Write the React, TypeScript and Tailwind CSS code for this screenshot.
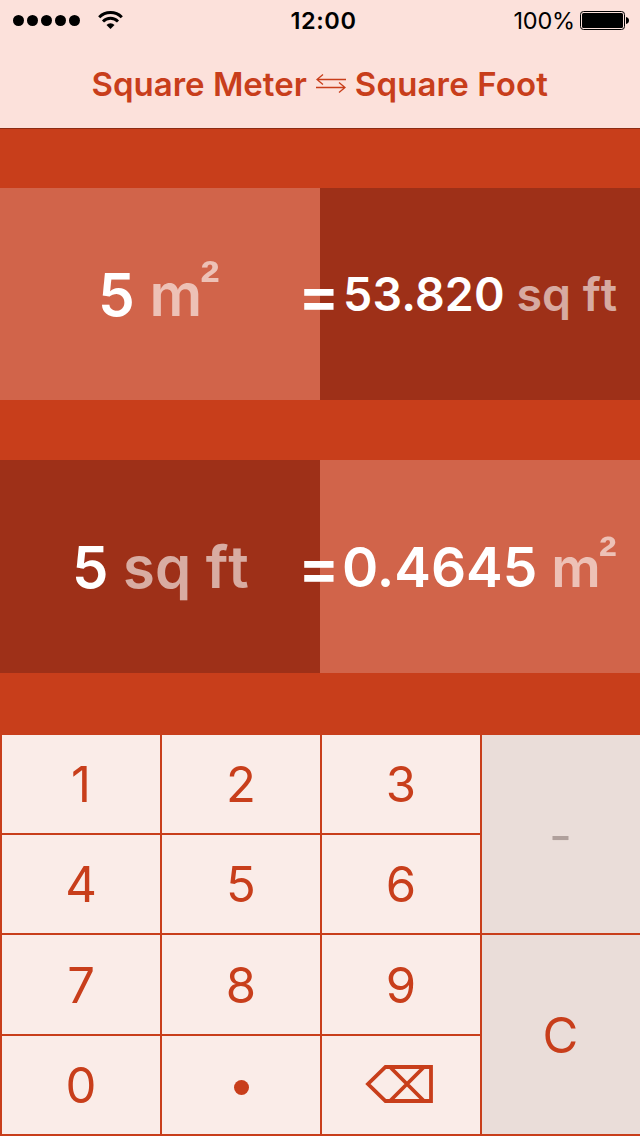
import type { ReactNode } from 'react';

const KEYS = ['1', '2', '3', '4', '5', '6', '7', '8', '9', '0'];

const StatusBar = () => (
  <div className="grid h-10 grid-cols-3 items-center pl-[13px] pr-[11px] text-black">
    <div className="flex items-center">
      <div className="flex gap-[3px]">
        {[0, 1, 2, 3, 4].map((dot) => (
          <span key={dot} className="h-[11px] w-[11px] rounded-full bg-black" />
        ))}
      </div>
      <svg className="ml-[18px]" width="25" height="19" viewBox="0 0 25 19" fill="none">
        <path d="M1.2 6.2a16 16 0 0 1 22.6 0" stroke="#000" strokeWidth="3" />
        <path d="M5 10.4a10.6 10.6 0 0 1 15 0" stroke="#000" strokeWidth="2.9" />
        <path d="M8.5 14a5.7 5.7 0 0 1 8 0l-4 4z" fill="#000" />
      </svg>
    </div>
    <span className="pl-[5px] pt-px text-center text-[23.5px] font-semibold tracking-[0.6px]">12:00</span>
    <div className="flex items-center justify-end">
      <span className="pt-[2px] text-[23.5px] tracking-[-0.2px]">100%</span>
      <svg className="ml-[5px]" width="49" height="19" viewBox="0 0 49 19">
        <rect x="0.5" y="0.5" width="44" height="18" rx="3" fill="none" stroke="#000" />
        <rect x="2" y="2" width="41" height="15" rx="1.5" fill="#000" />
        <path d="M46 6q3 .6 3 3.500t-3 3.500z" fill="#000" />
      </svg>
    </div>
  </div>
);

const SwapIcon = () => (
  <svg width="30" height="20" viewBox="0 0 30 20" fill="none" stroke="#c83e1b" strokeWidth="1.300">
    <path d="M30 5.500H1M7 .5 1 5.500 7 10.500" />
    <path d="M0 13.500h29M23 8.500 29 13.500 23 18.500" />
  </svg>
);

const Equals = () => (
  <span className="absolute left-[298px] top-0 flex h-full items-center text-[62px] font-semibold text-white">
    =
  </span>
);

const Unit = ({ children }: { children: ReactNode }) => (
  <span className="text-white/60 [font-kerning:none]">{children}</span>
);

export default function App() {
  return (
    <main
      className="flex h-[1136px] w-[640px] flex-col overflow-hidden bg-[#c83e1b]"
      style={{ fontFamily: 'Inter, "Liberation Sans", sans-serif' }}
    >
      <header className="h-[129px] border-b border-[#8d2c14] bg-[#fce1db]">
        <StatusBar />
        <h1 className="flex h-[88px] items-center pl-[91.5px] pt-px text-[33px] font-semibold text-[#c83e1b]">
          <span>Square Meter</span>
          <span className="ml-[9px] mr-[9px] pb-[2px]"><SwapIcon /></span>
          <span className="tracking-[0.15px]">Square Foot</span>
        </h1>
      </header>

      {/* square meters to square feet */}
      <section className="relative mt-[59px] grid h-[212px] grid-cols-2 font-semibold text-white">
        <div className="flex items-center bg-[#d1644a] pl-[98px] pt-px text-[58.5px] leading-[72px]">
          <p className="whitespace-nowrap">5 <Unit>m<span className="-ml-[2px] align-[14px] font-['Liberation_Sans'] text-[58px] leading-[0] font-bold">²</span></Unit></p>
        </div>
        <div className="flex items-center bg-[#9e3018] pl-[23px] pt-px text-[46.5px]">
          <p className="whitespace-nowrap"><span className="tracking-[0.15px]">53.820</span> <Unit>sq ft</Unit></p>
        </div>
        <Equals />
      </section>

      {/* square feet to square meters */}
      <section className="relative mt-[60px] grid h-[213px] grid-cols-2 font-semibold text-white">
        <div className="flex items-center bg-[#9e3018] pl-[72px] pt-px text-[58px]">
          <p className="whitespace-nowrap">5 <Unit>sq ft</Unit></p>
        </div>
        <div className="flex items-center bg-[#d1644a] pl-[22px] pt-px text-[55px] leading-[68px]">
          <p className="whitespace-nowrap">0.4645 <Unit>m<span className="-ml-[2px] align-[12px] font-['Liberation_Sans'] text-[54px] leading-[0] font-bold">²</span></Unit></p>
        </div>
        <Equals />
      </section>

      <div className="mt-[62px] flex gap-[2px] pl-[2px] text-[49px] text-[#c83e1b]">
        <div className="grid grid-cols-[158px_158px_158px] grid-rows-[98px_98px_99px_98px] gap-[2px]">
          {KEYS.map((key) => (
            <button key={key} className="flex items-center justify-center bg-[#faece8] pt-[2px]">
              {key}
            </button>
          ))}
          <button aria-label="Decimal point" className="flex items-center justify-center bg-[#faece8] pt-[5px]">
            <span className="h-[15px] w-[15px] rounded-full bg-[#c83e1b]" />
          </button>
          <button aria-label="Delete" className="flex items-center justify-center bg-[#faece8] pr-[4px] pb-[2px]">
            <svg width="68" height="40" viewBox="0 0 68 40" fill="none" stroke="#c83e1b" strokeWidth="3.800">
              <path d="M20.500 3H66V37H20.500L3 20ZM25 3 59 37M59 3 25 37" />
            </svg>
          </button>
        </div>
        <div className="grid grid-cols-[158px] grid-rows-[198px_199px] gap-[2px]">
          <button className="flex items-center justify-center bg-[#eaddd9] pt-[4px] pr-px text-[50px] text-[#b0a09c]">-</button>
          <button className="flex items-center justify-center bg-[#eaddd9] pt-[2px] pr-px">C</button>
        </div>
      </div>
    </main>
  );
}
